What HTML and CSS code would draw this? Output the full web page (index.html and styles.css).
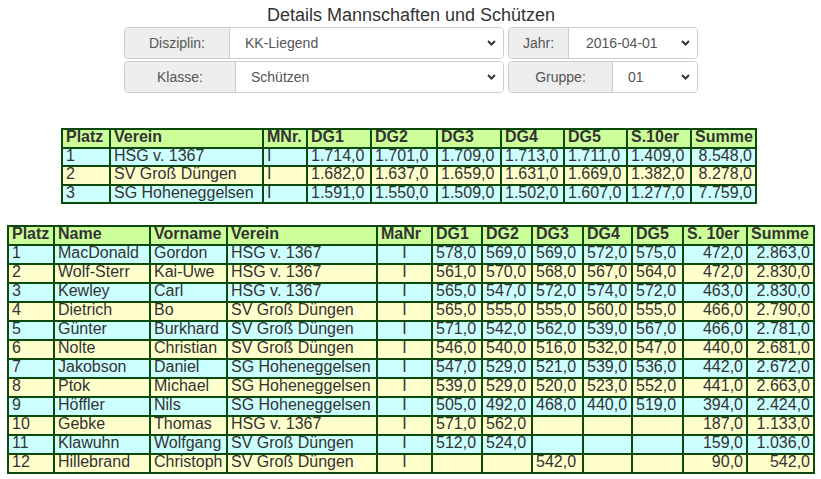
FILE: index.html
```html
<!DOCTYPE html>
<html lang="de">
<head>
<meta charset="utf-8">
<title>Details Mannschaften und Schützen</title>
<link rel="stylesheet" href="styles.css">
</head>
<body>
<div class="page">
  <h1 class="title">Details Mannschaften und Schützen</h1>
  <div class="filters">
    <div class="frow">
      <div class="group g-left">
        <span class="addon a-dis">Disziplin:</span>
        <div class="sel"><span class="val">KK-Liegend</span><svg class="chev" width="9" height="6" viewBox="0 0 9 6"><path d="M1 1 L4.5 4.5 L8 1" fill="none" stroke="#333" stroke-width="2"/></svg></div>
      </div>
      <div class="group g-right">
        <span class="addon a-jahr">Jahr:</span>
        <div class="sel"><span class="val v-jahr">2016-04-01</span><svg class="chev" width="9" height="6" viewBox="0 0 9 6"><path d="M1 1 L4.5 4.5 L8 1" fill="none" stroke="#333" stroke-width="2"/></svg></div>
      </div>
    </div>
    <div class="frow">
      <div class="group g-left">
        <span class="addon a-kla">Klasse:</span>
        <div class="sel"><span class="val">Schützen</span><svg class="chev" width="9" height="6" viewBox="0 0 9 6"><path d="M1 1 L4.5 4.5 L8 1" fill="none" stroke="#333" stroke-width="2"/></svg></div>
      </div>
      <div class="group g-right">
        <span class="addon a-gru">Gruppe:</span>
        <div class="sel"><span class="val">01</span><svg class="chev" width="9" height="6" viewBox="0 0 9 6"><path d="M1 1 L4.5 4.5 L8 1" fill="none" stroke="#333" stroke-width="2"/></svg></div>
      </div>
    </div>
  </div>

  <table class="grid t1">
    <thead>
      <tr>
        <th class="c1-platz">Platz</th><th class="c1-verein">Verein</th><th class="c1-mnr">MNr.</th>
        <th class="c1-dg1">DG1</th><th class="c1-dg2">DG2</th><th class="c1-dg3">DG3</th><th class="c1-dg4">DG4</th><th class="c1-dg5">DG5</th>
        <th class="c1-s10">S.10er</th><th class="c1-sum">Summe</th>
      </tr>
    </thead>
    <tbody>
      <tr class="odd"><td>1</td><td>HSG v. 1367</td><td>I</td><td>1.714,0</td><td>1.701,0</td><td>1.709,0</td><td>1.713,0</td><td>1.711,0</td><td>1.409,0</td><td class="r">8.548,0</td></tr>
      <tr class="even"><td>2</td><td>SV Groß Düngen</td><td>I</td><td>1.682,0</td><td>1.637,0</td><td>1.659,0</td><td>1.631,0</td><td>1.669,0</td><td>1.382,0</td><td class="r">8.278,0</td></tr>
      <tr class="odd"><td>3</td><td>SG Hoheneggelsen</td><td>I</td><td>1.591,0</td><td>1.550,0</td><td>1.509,0</td><td>1.502,0</td><td>1.607,0</td><td>1.277,0</td><td class="r">7.759,0</td></tr>
    </tbody>
  </table>

  <table class="grid t2">
    <thead>
      <tr>
        <th class="c2-platz">Platz</th><th class="c2-name">Name</th><th class="c2-vor">Vorname</th><th class="c2-verein">Verein</th><th class="c2-manr">MaNr</th>
        <th class="c2-dg1">DG1</th><th class="c2-dg2">DG2</th><th class="c2-dg3">DG3</th><th class="c2-dg4">DG4</th><th class="c2-dg5">DG5</th>
        <th class="c2-s10">S. 10er</th><th class="c2-sum">Summe</th>
      </tr>
    </thead>
    <tbody>
      <tr class="odd"><td>1</td><td>MacDonald</td><td>Gordon</td><td>HSG v. 1367</td><td class="c">I</td><td>578,0</td><td>569,0</td><td>569,0</td><td>572,0</td><td>575,0</td><td class="r">472,0</td><td class="r">2.863,0</td></tr>
      <tr class="even"><td>2</td><td>Wolf-Sterr</td><td>Kai-Uwe</td><td>HSG v. 1367</td><td class="c">I</td><td>561,0</td><td>570,0</td><td>568,0</td><td>567,0</td><td>564,0</td><td class="r">472,0</td><td class="r">2.830,0</td></tr>
      <tr class="odd"><td>3</td><td>Kewley</td><td>Carl</td><td>HSG v. 1367</td><td class="c">I</td><td>565,0</td><td>547,0</td><td>572,0</td><td>574,0</td><td>572,0</td><td class="r">463,0</td><td class="r">2.830,0</td></tr>
      <tr class="even"><td>4</td><td>Dietrich</td><td>Bo</td><td>SV Groß Düngen</td><td class="c">I</td><td>565,0</td><td>555,0</td><td>555,0</td><td>560,0</td><td>555,0</td><td class="r">466,0</td><td class="r">2.790,0</td></tr>
      <tr class="odd"><td>5</td><td>Günter</td><td>Burkhard</td><td>SV Groß Düngen</td><td class="c">I</td><td>571,0</td><td>542,0</td><td>562,0</td><td>539,0</td><td>567,0</td><td class="r">466,0</td><td class="r">2.781,0</td></tr>
      <tr class="even"><td>6</td><td>Nolte</td><td>Christian</td><td>SV Groß Düngen</td><td class="c">I</td><td>546,0</td><td>540,0</td><td>516,0</td><td>532,0</td><td>547,0</td><td class="r">440,0</td><td class="r">2.681,0</td></tr>
      <tr class="odd"><td>7</td><td>Jakobson</td><td>Daniel</td><td>SG Hoheneggelsen</td><td class="c">I</td><td>547,0</td><td>529,0</td><td>521,0</td><td>539,0</td><td>536,0</td><td class="r">442,0</td><td class="r">2.672,0</td></tr>
      <tr class="even"><td>8</td><td>Ptok</td><td>Michael</td><td>SG Hoheneggelsen</td><td class="c">I</td><td>539,0</td><td>529,0</td><td>520,0</td><td>523,0</td><td>552,0</td><td class="r">441,0</td><td class="r">2.663,0</td></tr>
      <tr class="odd"><td>9</td><td>Höffler</td><td>Nils</td><td>SG Hoheneggelsen</td><td class="c">I</td><td>505,0</td><td>492,0</td><td>468,0</td><td>440,0</td><td>519,0</td><td class="r">394,0</td><td class="r">2.424,0</td></tr>
      <tr class="even"><td>10</td><td>Gebke</td><td>Thomas</td><td>HSG v. 1367</td><td class="c">I</td><td>571,0</td><td>562,0</td><td></td><td></td><td></td><td class="r">187,0</td><td class="r">1.133,0</td></tr>
      <tr class="odd"><td>11</td><td>Klawuhn</td><td>Wolfgang</td><td>SV Groß Düngen</td><td class="c">I</td><td>512,0</td><td>524,0</td><td></td><td></td><td></td><td class="r">159,0</td><td class="r">1.036,0</td></tr>
      <tr class="even"><td>12</td><td>Hillebrand</td><td>Christoph</td><td>SV Groß Düngen</td><td class="c">I</td><td></td><td></td><td>542,0</td><td></td><td></td><td class="r">90,0</td><td class="r">542,0</td></tr>
    </tbody>
  </table>
</div>
</body>
</html>
```

FILE: styles.css
```css
* { box-sizing: border-box; }

html, body {
  margin: 0;
  padding: 0;
  background: #fff;
}

body {
  font-family: "Liberation Sans", Arial, sans-serif;
  color: #333;
}

.page {
  display: flex;
  flex-direction: column;
  align-items: center;
  padding: 5px 0 0 1px;
}

.title {
  margin: 0;
  font-size: 18px;
  font-weight: normal;
  line-height: 21px;
  height: 21px;
  color: #333;
}

.filters {
  margin-top: 1px;
  width: 574px;
  display: flex;
  flex-direction: column;
  gap: 2px;
}

.frow {
  display: flex;
  gap: 4px;
  height: 32px;
}

.group {
  display: flex;
  border: 1px solid #ccc;
  border-radius: 4px;
  overflow: hidden;
  font-size: 14px;
  color: #555;
}

.g-left { width: 380px; }
.g-right { width: 190px; }

.addon {
  flex: none;
  display: flex;
  align-items: center;
  justify-content: center;
  background: #eee;
  border-right: 1px solid #ccc;
}

.a-dis { width: 105px; }
.a-kla { width: 111px; }
.a-jahr { width: 60px; }
.a-gru { width: 104px; }

.sel {
  flex: 1;
  display: flex;
  align-items: center;
  justify-content: space-between;
  padding: 0 7px 0 15px;
  background: #fff;
}

.v-jahr { margin-left: 2px; }

.chev { flex: none; }

.grid {
  border-collapse: separate;
  border-spacing: 0;
  table-layout: fixed;
  border: 1px solid #0b4a0b;
  font-size: 16px;
  color: #333;
}

.grid th,
.grid td {
  border: 1px solid #0b4a0b;
  padding: 0 3px 4px;
  line-height: 13px;
  text-align: left;
  white-space: nowrap;
  overflow: hidden;
}

.grid th {
  background: #ccff99;
  font-weight: bold;
}

.grid tr.odd td { background: #ccffff; }
.grid tr.even td { background: #ffffcc; }

.grid td.r { text-align: right; }
.grid td.c { text-align: center; }

/* Table 1 */
.t1 {
  width: 696px;
  margin: 35px 4px 0 0;
}

.t1 th,
.t1 td { padding-bottom: 3.5px; }

.c1-platz { width: 48px; }
.c1-verein { width: 153px; }
.c1-mnr { width: 44px; }
.c1-dg1 { width: 64px; }
.c1-dg2 { width: 66px; }
.c1-dg3 { width: 64px; }
.c1-dg4 { width: 63px; }
.c1-dg5 { width: 63px; }
.c1-s10 { width: 64px; }
.c1-sum { width: 65px; }

/* Table 2 */
.t2 {
  width: 808px;
  margin-top: 21px;
}

.c2-platz { width: 46px; }
.c2-name { width: 96px; }
.c2-vor { width: 77px; }
.c2-verein { width: 150px; }
.c2-manr { width: 55px; }
.c2-dg1 { width: 50px; }
.c2-dg2 { width: 50px; }
.c2-dg3 { width: 51px; }
.c2-dg4 { width: 49px; }
.c2-dg5 { width: 51px; }
.c2-s10 { width: 64px; }
.c2-sum { width: 67px; }
```
